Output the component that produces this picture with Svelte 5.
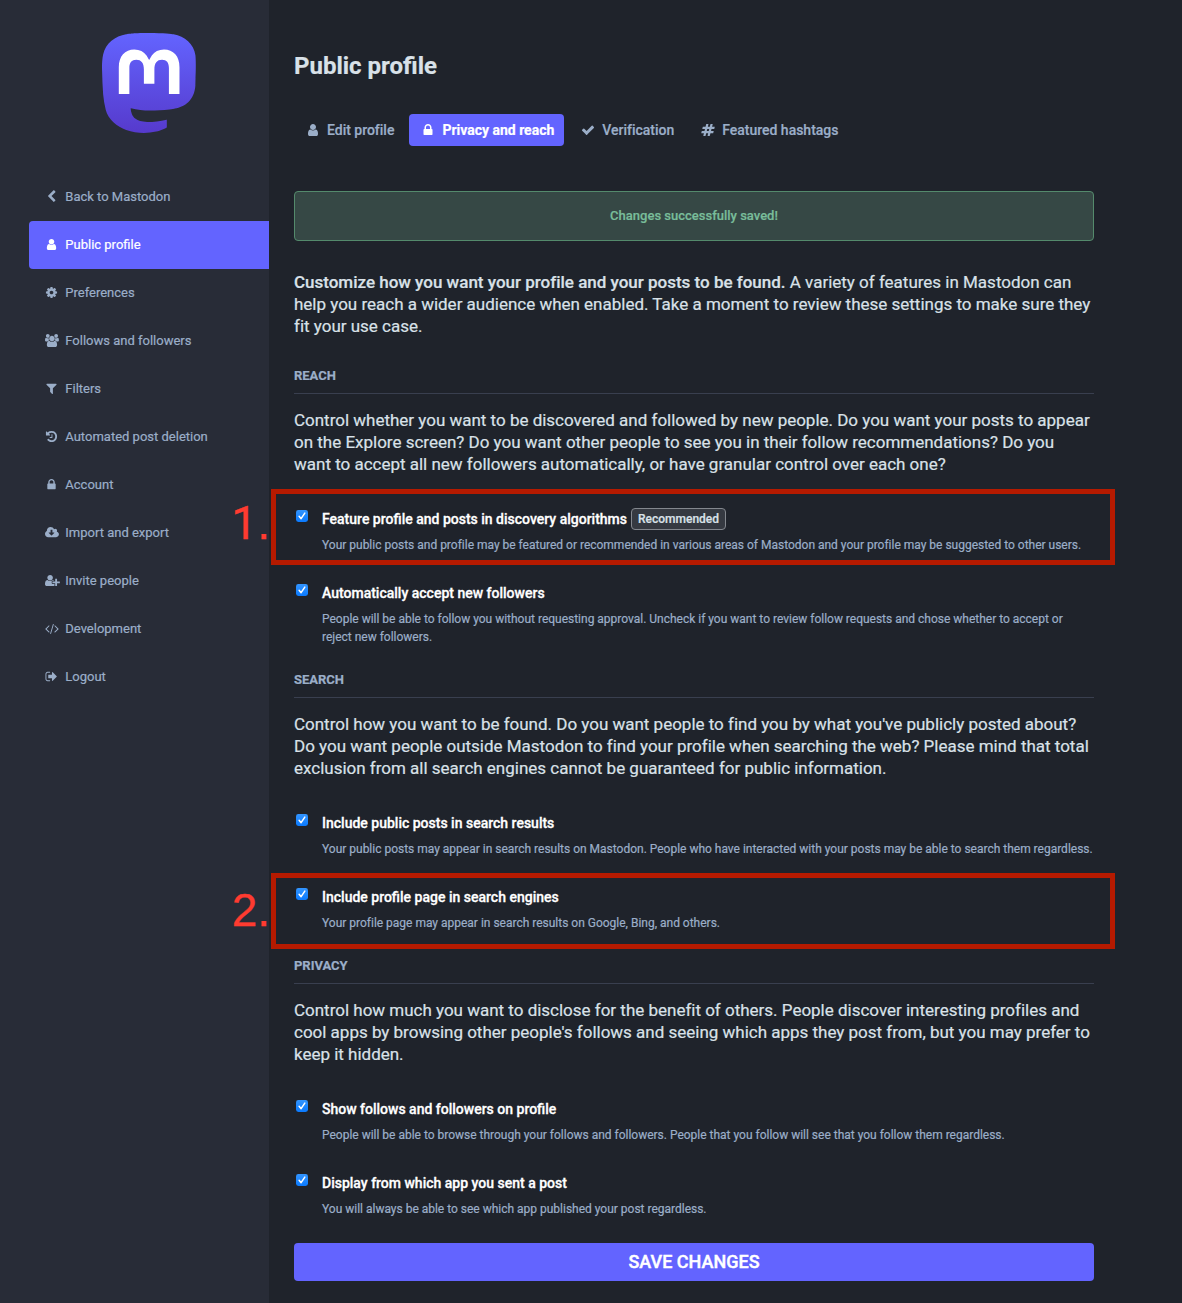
<script>
  const icons = {
    user: { w: 1792, d: 'M1536 1399q0 109-62.5 187t-150.5 78h-854q-88 0-150.5-78t-62.5-187q0-85 8.5-160.5t31.5-152 58.5-131 94-89 134.5-34.5q131 128 313 128t313-128q76 0 134.5 34.5t94 89 58.5 131 31.5 152 8.5 160.5zm-256-887q0 159-112.5 271.5t-271.5 112.5-271.5-112.5-112.5-271.5 112.5-271.5 271.5-112.5 271.5 112.5 112.5 271.5z' },
    lock: { w: 1792, d: 'M640 768h512v-192q0-106-75-181t-181-75-181 75-75 181v192zm832 96v576q0 40-28 68t-68 28h-960q-40 0-68-28t-28-68v-576q0-40 28-68t68-28h32v-192q0-184 132-316t316-132 316 132 132 316v192h32q40 0 68 28t28 68z' },
    check: { w: 1792, d: 'M1671 566q0 40-28 68l-724 724-136 136q-28 28-68 28t-68-28l-136-136-362-362q-28-28-28-68t28-68l136-136q28-28 68-28t68 28l294 295 656-657q28-28 68-28t68 28l136 136q28 28 28 68z' },
    hashtag: { w: 1792, d: 'M991 1024l64-256h-254l-64 256h254zm768-504l-56 224q-7 24-31 24h-327l-64 256h311q15 0 25 12 10 14 6 28l-56 224q-5 24-31 24h-327l-81 328q-7 24-31 24h-224q-16 0-26-12-9-12-6-28l78-312h-254l-81 328q-7 24-31 24h-225q-15 0-25-12-9-12-6-28l78-312h-311q-15 0-25-12-9-12-6-28l56-224q7-24 31-24h327l64-256h-311q-15 0-25-12-10-14-6-28l56-224q5-24 31-24h327l81-328q7-24 32-24h224q15 0 25 12 9 12 6 28l-78 312h254l81-328q7-24 32-24h224q15 0 25 12 9 12 6 28l-78 312h311q15 0 25 12 9 12 6 28z' },
    back: { w: 1792, d: 'M1427 301l-531 531 531 531q19 19 19 45t-19 45l-166 166q-19 19-45 19t-45-19l-742-742q-19-19-19-45t19-45l742-742q19-19 45-19t45 19l166 166q19 19 19 45t-19 45z' },
    cog: { w: 1792, d: 'M1152 896q0-106-75-181t-181-75-181 75-75 181 75 181 181 75 181-75 75-181zm512-109v222q0 12-8 23t-20 13l-185 28q-19 54-39 91 35 50 107 138 10 12 10 25t-9 23q-27 37-99 108t-94 71q-12 0-26-9l-138-108q-44 23-91 38-16 136-29 186-7 28-36 28h-222q-14 0-24.5-8.5t-11.5-21.5l-28-184q-49-16-90-37l-141 107q-10 9-25 9-14 0-25-11-126-114-165-168-7-10-7-23 0-12 8-23 15-21 51-66.5t54-70.5q-27-50-41-99l-183-27q-13-2-21-12.5t-8-23.5v-222q0-12 8-23t19-13l186-28q14-46 39-92-40-57-107-138-10-12-10-24 0-10 9-23 26-36 98.5-107.5t94.5-71.5q13 0 26 10l138 107q44-23 91-38 16-136 29-186 7-28 36-28h222q14 0 24.5 8.5t11.5 21.5l28 184q49 16 90 37l142-107q9-9 24-9 13 0 25 10 129 119 165 170 7 8 7 22 0 12-8 23-15 21-51 66.5t-54 70.5q26 50 41 98l183 28q13 2 21 12.5t8 23.5z' },
    users: { w: 1920, x: -64, d: 'M529 896q-162 5-265 128h-134q-82 0-138-40.5t-56-118.5q0-353 124-353 6 0 43.5 21t97.5 42.5 119 21.5q67 0 133-23-5 37-5 66 0 139 81 256zm1071 637q0 120-73 189.5t-194 69.5h-874q-121 0-194-69.5t-73-189.5q0-53 3.5-103.5t14-109 26.5-108.5 43-97.5 62-81 85.5-53.5 111.5-20q10 0 43 21.5t73 48 107 48 135 21.5 135-21.5 107-48 73-48 43-21.5q61 0 111.5 20t85.5 53.5 62 81 43 97.5 26.5 108.5 14 109 3.5 103.5zm-1024-1277q0 106-75 181t-181 75-181-75-75-181 75-181 181-75 181 75 75 181zm704 384q0 159-112.5 271.5t-271.5 112.5-271.5-112.5-112.5-271.5 112.5-271.5 271.5-112.5 271.5 112.5 112.5 271.5zm576 225q0 78-56 118.5t-138 40.5h-134q-103-123-265-128 81-117 81-256 0-29-5-66 66 23 133 23 59 0 119-21.5t97.5-42.5 43.5-21q124 0 124 353zm-128-609q0 106-75 181t-181 75-181-75-75-181 75-181 181-75 181 75 75 181z' },
    filter: { w: 1792, d: 'M1595 295q17 41-14 70l-493 493v742q0 42-39 59-13 5-25 5-27 0-45-19l-256-256q-19-19-19-45v-486l-493-493q-31-29-14-70 17-39 59-39h1280q42 0 59 39z' },
    history: { w: 1792, d: 'M1664 896q0 156-61 298t-164 245-245 164-298 61q-172 0-327-72.5t-264-204.5q-7-10-6.5-22.5t8.5-20.5l137-138q10-9 25-9 16 2 23 12 73 95 179 147t225 52q104 0 198.5-40.5t163.5-109.5 109.5-163.5 40.5-198.5-40.5-198.5-109.5-163.5-163.5-109.5-198.5-40.5q-98 0-188 35.5t-160 101.5l137 138q31 30 14 69-17 40-59 40h-448q-26 0-45-19t-19-45v-448q0-42 40-59 39-17 69 14l130 129q107-101 244.5-156.5t284.5-55.5q156 0 298 61t245 164 164 245 61 298zm-640-288v448q0 14-9 23t-23 9h-320q-14 0-23-9t-9-23v-64q0-14 9-23t23-9h224v-352q0-14 9-23t23-9h64q14 0 23 9t9 23z' },
    cloud: { w: 1920, x: -64, d: 'M1216 928q0-14-9-23t-23-9h-224v-352q0-13-9.5-22.5t-22.5-9.5h-192q-13 0-22.5 9.5t-9.5 22.5v352h-224q-13 0-22.5 9.5t-9.5 22.5q0 14 9 23l352 352q9 9 23 9t23-9l351-351q10-12 10-24zm640 224q0 159-112.5 271.5t-271.5 112.5h-1088q-185 0-316.5-131.5t-131.5-316.5q0-130 70-240t188-165q-2-30-2-43 0-212 150-362t362-150q156 0 285.5 87t188.5 231q71-62 166-62 106 0 181 75t75 181q0 76-41 138 130 31 213.5 135.5t83.5 238.5z' },
    invite: { w: 2048, d: 'M704 896q-159 0-271.5-112.5t-112.5-271.5 112.5-271.5 271.5-112.5 271.5 112.5 112.5 271.5-112.5 271.5-271.5 112.5zM1664 1024h352q13 0 22.5 9.5t9.5 22.5v192q0 13-9.5 22.5t-22.5 9.5h-352v352q0 13-9.5 22.5t-22.5 9.5h-192q-13 0-22.5-9.5t-9.5-22.5v-352h-352q-13 0-22.5-9.5t-9.5-22.5v-192q0-13 9.5-22.5t22.5-9.5h352v-352q0-13 9.5-22.5t22.5-9.5h192q13 0 22.5 9.5t9.5 22.5v352zM928 1248q0 52 38 90t90 38h256v238q-68 50-171 50h-874q-121 0-194-69t-73-190q0-53 3.5-103.5t14-109 26.5-108.5 43-97.5 62-81 85.5-53.5 111.5-20q19 0 39 17 79 61 154.5 91.5t164.5 30.5 164.5-30.5 154.5-91.5q20-17 39-17 132 0 217 96h-223q-52 0-90 38t-38 90z' },
    code: { w: 1920, x: -64, d: 'M553 1399l-50 50q-10 10-23 10t-23-10l-466-466q-10-10-10-23t10-23l466-466q10-10 23-10t23 10l50 50q10 10 10 23t-10 23l-393 393 393 393q10 10 10 23t-10 23zm591-1067l-373 1291q-4 13-15.5 19.5t-23.5 2.5l-62-17q-13-4-19.5-15.5t-2.5-24.5l373-1291q4-13 15.5-19.5t23.5-2.5l62 17q13 4 19.5 15.5t2.5 24.5zm657 651l-466 466q-10 10-23 10t-23-10l-50-50q-10-10-10-23t10-23l393-393-393-393q-10-10-10-23t10-23l50-50q10-10 23-10t23 10l466 466q10 10 10 23t-10 23z' },
    logout: { w: 1792, d: 'M704 1440q0 4 1 20t.5 26.5-3 23.5-10 19.5-20.5 6.5h-320q-119 0-203.5-84.5t-84.5-203.5v-704q0-119 84.5-203.5t203.5-84.5h320q13 0 22.5 9.5t9.5 22.5q0 4 1 20t.5 26.5-3 23.5-10 19.5-20.5 6.5h-320q-66 0-113 47t-47 113v704q0 66 47 113t113 47h312l11.5 1 11.5 3 8 5.5 7 9 2 13.5zm928-544q0 26-19 45l-544 544q-19 19-45 19t-45-19-19-45v-288h-448q-26 0-45-19t-19-45v-384q0-26 19-45t45-19h448v-288q0-26 19-45t45-19 45 19l544 544q19 19 19 45z' }
  };

  const nav = [
    ['back', 'Back to Mastodon'],
    ['user', 'Public profile'],
    ['cog', 'Preferences'],
    ['users', 'Follows and followers'],
    ['filter', 'Filters'],
    ['history', 'Automated post deletion'],
    ['lock', 'Account'],
    ['cloud', 'Import and export'],
    ['invite', 'Invite people'],
    ['code', 'Development'],
    ['logout', 'Logout']
  ];

  const tabs = [
    ['user', 'Edit profile'],
    ['lock', 'Privacy and reach'],
    ['check', 'Verification'],
    ['hashtag', 'Featured hashtags']
  ];

  const sections = [
    {
      title: 'Reach',
      lead: ['Control whether you want to be discovered and followed by new people. Do you want your posts to appear', 'on the Explore screen? Do you want other people to see you in their follow recommendations? Do you', 'want to accept all new followers automatically, or have granular control over each one?'],
      options: [
        { label: 'Feature profile and posts in discovery algorithms', badge: 'Recommended', mark: '1', hint: ['Your public posts and profile may be featured or recommended in various areas of Mastodon and your profile may be suggested to other users.'] },
        { label: 'Automatically accept new followers', hint: ['People will be able to follow you without requesting approval. Uncheck if you want to review follow requests and chose whether to accept or', 'reject new followers.'] }
      ]
    },
    {
      title: 'Search',
      lead: ["Control how you want to be found. Do you want people to find you by what you've publicly posted about?", 'Do you want people outside Mastodon to find your profile when searching the web? Please mind that total', 'exclusion from all search engines cannot be guaranteed for public information.'],
      options: [
        { label: 'Include public posts in search results', hint: ['Your public posts may appear in search results on Mastodon. People who have interacted with your posts may be able to search them regardless.'] },
        { label: 'Include profile page in search engines', mark: '2', hint: ['Your profile page may appear in search results on Google, Bing, and others.'] }
      ]
    },
    {
      title: 'Privacy',
      lead: ['Control how much you want to disclose for the benefit of others. People discover interesting profiles and', "cool apps by browsing other people's follows and seeing which apps they post from, but you may prefer to", 'keep it hidden.'],
      options: [
        { label: 'Show follows and followers on profile', hint: ['People will be able to browse through your follows and followers. People that you follow will see that you follow them regardless.'] },
        { label: 'Display from which app you sent a post', hint: ['You will always be able to see which app published your post regardless.'] }
      ]
    }
  ];
</script>

{#snippet icon(name)}
  <span class="icon">
    <svg viewBox="{icons[name].x ?? 0} 0 {icons[name].w} 1792" aria-hidden="true"><path d={icons[name].d} /></svg>
  </span>
{/snippet}

{#snippet lines(list)}
  {#each list as line, i}{#if i > 0}<br />{/if}{line}{/each}
{/snippet}

<div class="page">
  <aside>
    <svg class="logo" viewBox="0 0 74.3 79" aria-label="Mastodon">
      <defs>
        <linearGradient id="brand" x1="0" y1="0" x2="0" y2="1">
          <stop offset="0" stop-color="#6364ff" />
          <stop offset="1" stop-color="#563acc" />
        </linearGradient>
      </defs>
      <path fill="url(#brand)" d="M73.8393 17.4898C72.6973 9.00165 65.2994 2.31235 56.5296 1.01614C55.05 0.797115 49.4441 0 36.4582 0H36.3612C23.3717 0 20.585 0.797115 19.1054 1.01614C10.5798 2.27644 2.79399 8.28712 0.904997 16.8758C-0.00358524 21.1056 -0.100549 25.7949 0.0682394 30.0965C0.308852 36.2651 0.355538 42.423 0.91577 48.5665C1.30307 52.6474 1.97872 56.6957 2.93763 60.6812C4.73325 68.042 12.0019 74.1676 19.1233 76.6666C26.7478 79.2728 34.9474 79.7055 42.8039 77.9162C43.6682 77.7151 44.5217 77.4817 45.3645 77.216C47.275 76.6092 49.5123 75.9305 51.1571 74.7385L51.2325 74.5948V68.6416L51.0171 68.4729C45.9835 69.675 40.8254 70.2777 35.6502 70.2682C26.7439 70.2682 24.3486 66.042 23.6626 64.2826C23.1113 62.762 22.7612 61.1759 22.6212 59.5646L22.8367 59.3886C27.7864 60.5826 32.8604 61.1853 37.9522 61.1839C39.1768 61.1839 40.3978 61.1839 41.6224 61.1516C46.7435 61.008 52.1411 60.7459 57.1796 59.7621L57.5387 59.6831C65.4861 58.157 73.0493 53.3672 73.8178 41.2381C73.8465 40.7606 73.9184 36.2364 73.9184 35.7409C73.9219 34.0569 74.4606 23.7949 73.8393 17.4898Z" />
      <path fill="#fff" d="M61.2484 27.0263V48.114H52.8916V27.6475C52.8916 23.3388 51.096 21.1413 47.4437 21.1413C43.4287 21.1413 41.4177 23.7409 41.4177 28.8755V40.0782H33.1111V28.8755C33.1111 23.7409 31.0965 21.1413 27.0815 21.1413C23.4507 21.1413 21.6371 23.3388 21.6371 27.6475V48.114H13.2839V27.0263C13.2839 22.7176 14.384 19.2946 16.5843 16.7572C18.8539 14.2258 21.8311 12.926 25.5264 12.926C29.8036 12.926 33.0357 14.5705 35.1905 17.8559L37.2698 21.346L39.3527 17.8559C41.5074 14.5705 44.7395 12.926 49.0095 12.926C52.7013 12.926 55.6784 14.2258 57.9553 16.7572C60.1531 19.2922 61.2508 22.7152 61.2484 27.0263Z" />
    </svg>
    <nav>
      {#each nav as [name, label], i}
        <a class:active={i === 1} href="#{name}">{@render icon(name)}{label}</a>
      {/each}
    </nav>
  </aside>

  <main>
    <h2>Public profile</h2>
    <div class="tabs">
      {#each tabs as [name, label], i}
        <a class:active={i === 1} href="#{name}">{@render icon(name)}{label}</a>
      {/each}
    </div>
    <div class="flash">Changes successfully saved!</div>
    <p class="lead"><strong>Customize how you want your profile and your posts to be found.</strong> A variety of features in Mastodon can<br />help you reach a wider audience when enabled. Take a moment to review these settings to make sure they<br />fit your use case.</p>

    {#each sections as section}
      <section>
        <h4>{section.title}</h4>
        <p class="lead">{@render lines(section.lead)}</p>
        <div class="options">
          {#each section.options as option}
            <div class="option">
              <svg class="checkbox" viewBox="0 0 12 12" role="checkbox" aria-checked="true" aria-label={option.label}>
                <rect width="12" height="12" rx="2.4" fill="url(#tick)" />
                <path d="M3.1 6.3l2 2.4 3.7-5.6" fill="none" stroke="#fff" stroke-width="1.5" stroke-linecap="round" stroke-linejoin="round" />
              </svg>
              <div class="label">{option.label}{#if option.badge}<span class="badge">{option.badge}</span>{/if}</div>
              <div class="hint">{@render lines(option.hint)}</div>
              {#if option.mark}
                <div class="frame" class:second={option.mark === '2'}>
                  <div class="mark"><span class:plain={option.mark === '1'}>{option.mark}</span>.</div>
                </div>
              {/if}
            </div>
          {/each}
        </div>
      </section>
    {/each}
    <button>Save changes</button>
  </main>

  <svg class="defs" aria-hidden="true">
    <defs>
      <linearGradient id="tick" x1="0" y1="0" x2="0" y2="1">
        <stop offset="0" stop-color="#3395ff" />
        <stop offset="1" stop-color="#0a7aff" />
      </linearGradient>
    </defs>
  </svg>
</div>

<style>
  :global(body) {
    background: #1f232b;
  }
  .page {
    display: flex;
    height: 1303px;
    overflow: hidden;
    font-family: Roboto, sans-serif;
    color: #9baec8;
    background: #1f232b;
    -webkit-text-stroke: 0.2px;
  }
  .defs {
    width: 0;
    height: 0;
  }
  a {
    color: inherit;
    text-decoration: none;
    display: flex;
    align-items: center;
  }
  aside {
    width: 240px;
    flex: none;
    padding-left: 29px;
    background: #282c37;
  }
  .logo {
    display: block;
    width: 94px;
    height: 100px;
    margin: 33px 0 40px 73px;
  }
  nav a {
    box-sizing: border-box;
    height: 48px;
    padding: 0 0 2px 14.6px;
    font-size: 13px;
    font-weight: 400;
    border-radius: 4px 0 0 4px;
  }
  nav a.active {
    background: #6364ff;
    color: #fff;
  }
  .icon {
    width: 1.2857em;
    height: 1em;
    margin-right: 5px;
    display: flex;
    justify-content: center;
  }
  .icon svg {
    height: 1em;
    fill: currentColor;
    overflow: visible;
  }
  main {
    width: 800px;
    padding-left: 25px;
    flex: none;
  }
  h2 {
    margin: 52px 0 34px;
    font-size: 24px;
    line-height: 28px;
    font-weight: 700;
    color: #d9e1e8;
  }
  .tabs {
    display: flex;
    gap: 5px;
  }
  .tabs a {
    height: 32px;
    padding: 0 10px;
    border-radius: 4px;
    font-size: 14px;
    font-weight: 500;
    letter-spacing: -0.01px;
  }
  .tabs a.active {
    background: #6364ff;
    color: #fff;
    font-weight: 700;
  }
  .flash {
    box-sizing: border-box;
    height: 50px;
    margin: 45px 0 30px;
    border: 1px solid #548a6c;
    border-radius: 4px;
    background: #364845;
    color: #79bd9a;
    text-align: center;
    font-size: 13px;
    font-weight: 500;
    line-height: 48px;
  }
  .lead {
    margin: 0;
    font-size: 17px;
    line-height: 22px;
    letter-spacing: -0.008px;
    color: #d9e1e8;
    white-space: nowrap;
  }
  .lead strong {
    font-weight: 500;
  }
  h4 {
    margin: 23px 0 15px;
    padding: 1px 0 7px;
    border-bottom: 1px solid #393f4f;
    font-size: 13px;
    line-height: 20px;
    font-weight: 700;
    letter-spacing: -0.03px;
    text-transform: uppercase;
  }
  .flash + .lead {
    margin-bottom: 28px;
  }
  .options {
    display: grid;
    gap: 27px;
    margin-top: 32px;
  }
  .option {
    position: relative;
    display: grid;
    grid-template-columns: 28px 1fr;
    row-gap: 5px;
  }
  .checkbox {
    width: 12px;
    height: 12px;
    margin: 3px 0 0 2px;
  }
  .label {
    display: flex;
    align-items: center;
    height: 24px;
    font-size: 14px;
    font-weight: 500;
    color: #fff;
    white-space: nowrap;
    -webkit-text-stroke: 0.3px;
  }
  .badge {
    box-sizing: border-box;
    height: 22px;
    margin-left: 4px;
    padding: 0 6px;
    border: 1px solid #83878e;
    border-radius: 4px;
    background: #353941;
    color: #d9e1e8;
    font-size: 12px;
    line-height: 20px;
    -webkit-text-stroke: 0.2px;
  }
  .hint {
    grid-column: 2;
    font-size: 12px;
    line-height: 18px;
    letter-spacing: -0.007px;
    white-space: nowrap;
  }
  .frame {
    position: absolute;
    box-sizing: border-box;
    left: -23px;
    top: -18px;
    width: 844px;
    height: 76px;
    border: 5px solid #b51a00;
  }
  .frame.second {
    top: -12px;
  }
  .mark {
    position: absolute;
    right: 840px;
    top: 4px;
    font: 46px/50px 'Liberation Sans', Arial, sans-serif;
    color: #ff3b30;
    -webkit-text-stroke: 0.3px;
  }
  .plain {
    font-family: Roboto, sans-serif;
  }
  .frame.second .mark {
    top: 7px;
  }
  button {
    display: block;
    width: 800px;
    height: 38px;
    margin-top: 25px;
    padding: 0;
    border: 0;
    border-radius: 4px;
    background: #6364ff;
    color: #fff;
    font: 500 18px/38px Roboto, sans-serif;
    -webkit-text-stroke: 0.4px;
    text-transform: uppercase;
  }
</style>
